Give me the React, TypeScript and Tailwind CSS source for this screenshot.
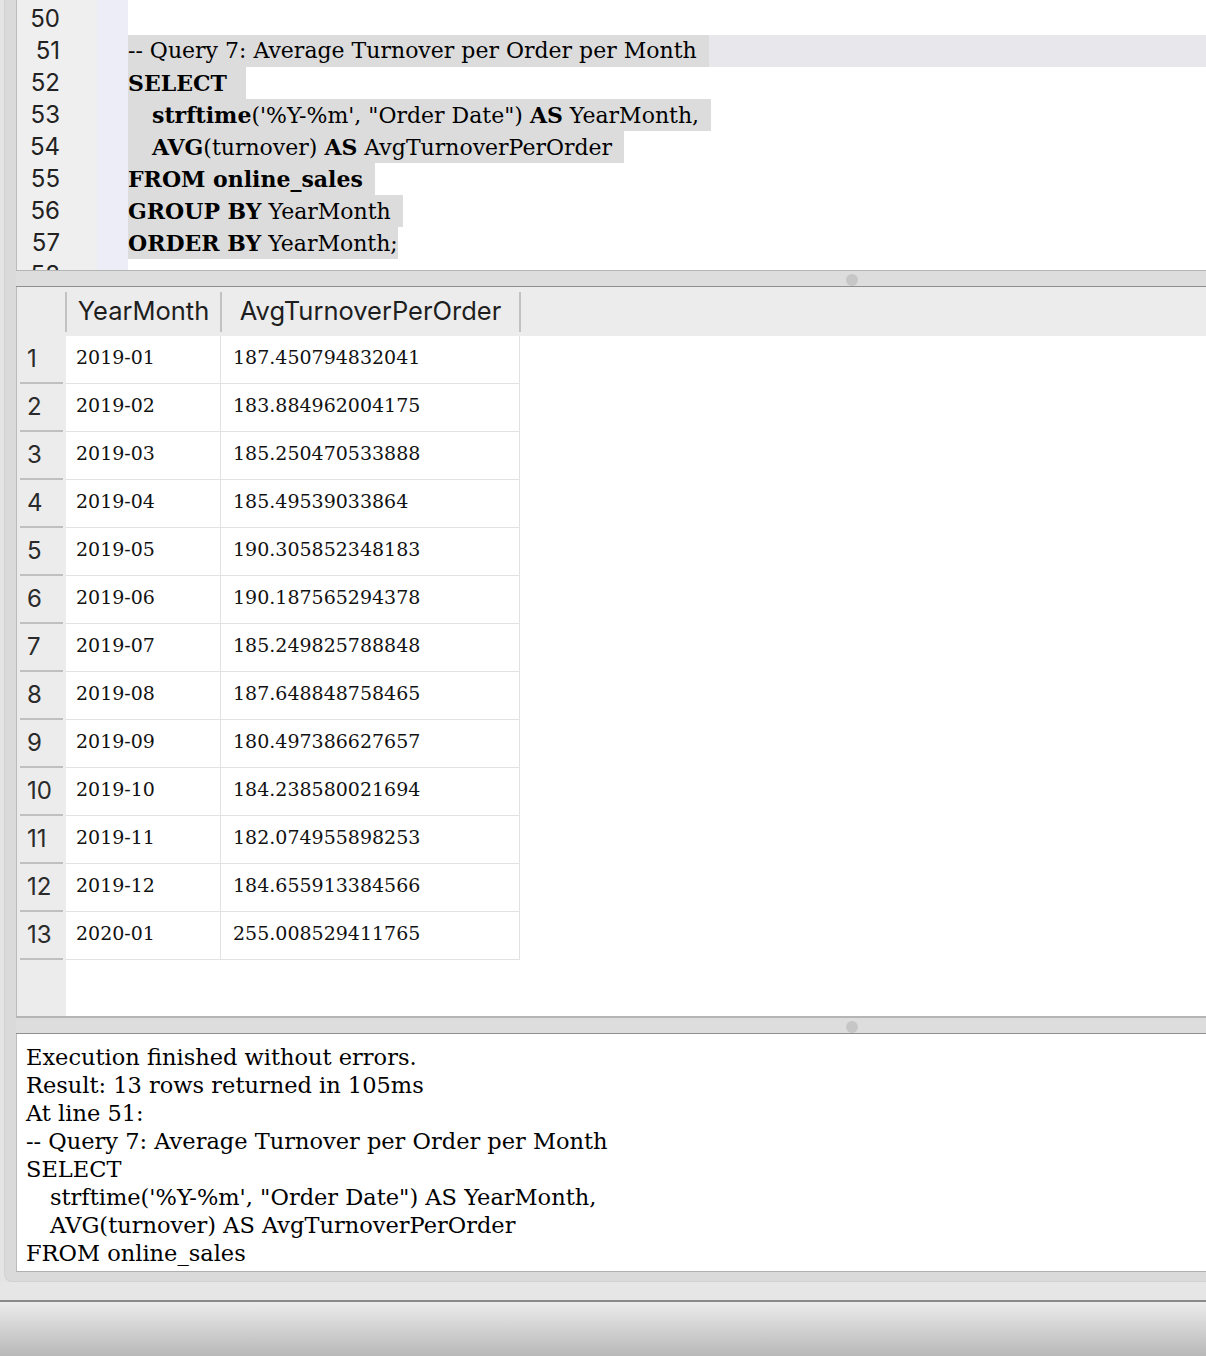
import React from 'react';

const serif = { fontFamily: '"DejaVu Serif", serif' };
const sans = { fontFamily: 'Inter, "Liberation Sans", sans-serif' };

const rows = [
  ['2019-01', '187.450794832041'],
  ['2019-02', '183.884962004175'],
  ['2019-03', '185.250470533888'],
  ['2019-04', '185.49539033864'],
  ['2019-05', '190.305852348183'],
  ['2019-06', '190.187565294378'],
  ['2019-07', '185.249825788848'],
  ['2019-08', '187.648848758465'],
  ['2019-09', '180.497386627657'],
  ['2019-10', '184.238580021694'],
  ['2019-11', '182.074955898253'],
  ['2019-12', '184.655913384566'],
  ['2020-01', '255.008529411765'],
];

const messages: [string, boolean][] = [
  ['Execution finished without errors.', false],
  ['Result: 13 rows returned in 105ms', false],
  ['At line 51:', false],
  ['-- Query 7: Average Turnover per Order per Month', false],
  ['SELECT', false],
  ['strftime(\'%Y-%m\', "Order Date") AS YearMonth,', true],
  ['AVG(turnover) AS AvgTurnoverPerOrder', true],
  ['FROM online_sales', false],
];

function Sel({ children, tail = true }: { children: React.ReactNode; tail?: boolean }) {
  return (
    <span className="inline-block h-[32px] bg-[#dcdcdc] whitespace-pre">
      {children}
      {tail && <span className="inline-block w-[12px]" />}
    </span>
  );
}

function Indent() {
  return <span className="inline-block w-[24px]" />;
}

function Splitter() {
  return (
    <div className="relative h-[17px] shrink-0 border-t border-b border-t-[#b5b5b5] border-b-[#8f8f8f] bg-[#dddddd]">
      <div className="absolute left-[830px] top-[3px] h-[12px] w-[12px] rounded-full bg-[#c6c6c6]" />
    </div>
  );
}

function Editor() {
  const nums = [50, 51, 52, 53, 54, 55, 56, 57, 58];
  return (
    <div className="flex h-[270px] shrink-0 overflow-hidden border-l border-[#bcbcbc] bg-white">
      <div className="w-[80px] shrink-0 bg-[#efefef] pt-[3px] text-[24px] leading-[32px] text-[#222]" style={sans}>
        {nums.map((n) => (
          <div key={n} className="pr-[37px] text-right">
            {n}
          </div>
        ))}
      </div>
      <div className="w-[31px] shrink-0 bg-[#ededf7]" />
      <div className="flex-1 pt-[3px] text-[22px] leading-[32px] text-black" style={serif}>
        <div className="h-[32px]" />
        <div className="h-[32px] bg-[#e8e8ec]">
          <Sel>-- Query 7: Average Turnover per Order per Month</Sel>
        </div>
        <div className="h-[32px]">
          <Sel>
            <b>SELECT</b>{' '}
          </Sel>
        </div>
        <div className="h-[32px]">
          <Sel>
            <Indent />
            <b>strftime</b>('%Y-%m', "Order Date") <b>AS</b> YearMonth,
          </Sel>
        </div>
        <div className="h-[32px]">
          <Sel>
            <Indent />
            <b>AVG</b>(turnover) <b>AS</b> AvgTurnoverPerOrder
          </Sel>
        </div>
        <div className="h-[32px]">
          <Sel>
            <b>FROM online_sales</b>
          </Sel>
        </div>
        <div className="h-[32px]">
          <Sel>
            <b>GROUP BY</b> YearMonth
          </Sel>
        </div>
        <div className="h-[32px]">
          <Sel tail={false}>
            <b>ORDER BY</b> YearMonth;
          </Sel>
        </div>
      </div>
    </div>
  );
}

function Grid() {
  return (
    <div className="flex h-[730px] shrink-0 flex-col border-l border-b border-l-[#bcbcbc] border-b-[#b5b5b5] bg-white">
      <div className="flex h-[49px] shrink-0 items-center bg-[#ececec] text-[25.5px] text-[#1e1e1e]" style={sans}>
        <div className="h-full w-[48px] shrink-0" />
        <div className="h-[40px] w-[2px] bg-[#c2c2c2]" />
        <div className="w-[153px] text-center">YearMonth</div>
        <div className="h-[40px] w-[2px] bg-[#c2c2c2]" />
        <div className="w-[297px] text-center">AvgTurnoverPerOrder</div>
        <div className="h-[40px] w-[2px] bg-[#c2c2c2]" />
      </div>
      <div className="flex flex-1">
        <div className="w-[49px] shrink-0 bg-[#ececec]">
          {rows.map((_, i) => (
            <div key={i} className="flex h-[48px] flex-col">
              <div className="flex flex-1 items-center pl-[10px] text-[24px] text-[#2a2a2a]" style={sans}>
                {i + 1}
              </div>
              <div className="mx-[3px] h-[2px] bg-[#c0c0c0]" />
            </div>
          ))}
        </div>
        <div>
          {rows.map(([a, b]) => (
            <div key={a} className="flex h-[48px] text-[19px] text-[#111]" style={serif}>
              <div className="flex w-[155px] items-center border-r border-b border-[#e2e2e2] pl-[10px] pb-[4px]">{a}</div>
              <div className="flex w-[299px] items-center border-r border-b border-[#e2e2e2] pl-[12px] pb-[4px]">{b}</div>
            </div>
          ))}
        </div>
      </div>
    </div>
  );
}

function Messages() {
  return (
    <div className="h-[238px] shrink-0 border-l border-b border-l-[#bcbcbc] border-b-[#b0b0b0] bg-white pl-[9px] pt-[9px] text-[22.5px] leading-[28px] text-black" style={serif}>
      {messages.map(([m, indent], i) => (
        <div key={i} className={indent ? 'whitespace-pre pl-[24px]' : 'whitespace-pre'}>
          {m}
        </div>
      ))}
    </div>
  );
}

export default function App() {
  return (
    <div className="flex h-[1356px] w-[1206px] flex-col overflow-hidden bg-[#e4e4e4]">
      <div className="ml-[4px] flex h-[1282px] shrink-0 flex-col rounded-bl-[8px] border-b border-l border-[#d2d2d2] bg-[#dadada] pl-[11px]">
        <Editor />
        <Splitter />
        <Grid />
        <Splitter />
        <Messages />
      </div>
      <div className="h-[18px] shrink-0 bg-[#e6e6e6]" />
      <div className="h-[2px] shrink-0 bg-[#8a8a8a]" />
      <div className="flex-1 bg-gradient-to-b from-[#ececec] to-[#b8b8b8]" />
    </div>
  );
}
